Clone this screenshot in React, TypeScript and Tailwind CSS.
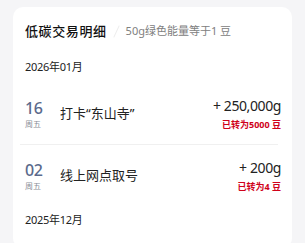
const font = "font-['Noto_Sans','Noto_Sans_CJK_SC',sans-serif]";

interface Trade {
  day: string;
  week: string;
  title: string;
  amount: string;
  beans: string;
}

const january: Trade[] = [
  { day: "16", week: "周五", title: "打卡“东山寺”", amount: "+ 250,000g", beans: "已转为5000 豆" },
  { day: "02", week: "周五", title: "线上网点取号", amount: "+ 200g", beans: "已转为4 豆" },
];

const TradeRow = ({ t }: { t: Trade }) => (
  <div className="flex items-center pt-[14px] pb-[13px]">
    <div className="flex w-[35px] flex-col">
      <span className="text-[16px] leading-[18px] font-medium tracking-[-0.5px] text-[#5b6a8c]">{t.day}</span>
      <span className="mt-[2px] text-[8px] leading-[10px] text-[#8a8f99]">{t.week}</span>
    </div>
    <div className="flex-1 text-[13px] text-[#222]">{t.title}</div>
    <div className="flex flex-col items-end">
      <span className="text-[14px] leading-[18px] tracking-[-0.4px] text-[#222]">{t.amount}</span>
      <span className="mt-[4px] text-[9px] leading-[12px] font-bold text-[#d0021b]">{t.beans}</span>
    </div>
  </div>
);

export default function App() {
  return (
    <div className={`${font} h-[243px] w-[305px] overflow-hidden bg-[#f5f5f7]`}>
      <div className="ml-[13px] mt-[7px] w-[279px] rounded-[10px] bg-white pl-[12px] pr-[11px] pb-[20px]">
        <div className="flex items-center pt-[14px]">
          <span className="text-[13px] leading-[20px] font-medium tracking-[0.6px] text-[#111]">低碳交易明细</span>
          <span className="mx-[9px] h-[13px] w-px rotate-[25deg] bg-[#ececec]" />
          <span className="text-[11px] leading-[20px] text-[#808080]">50g绿色能量等于1 豆</span>
        </div>
        <div className="mt-[18px] text-[11px] leading-[16px] tracking-[-0.3px] text-[#222]">2026年01月</div>
        <div className="mt-[8px]">
          {january.map((t, i) => (
            <div key={t.day}>
              {i > 0 && <div className="-ml-[5px] h-px w-[258px] bg-[#f0f0f0]" />}
              <TradeRow t={t} />
            </div>
          ))}
        </div>
        <div className="mt-[6px] text-[11px] leading-[16px] tracking-[-0.3px] text-[#222]">2025年12月</div>
      </div>
    </div>
  );
}
